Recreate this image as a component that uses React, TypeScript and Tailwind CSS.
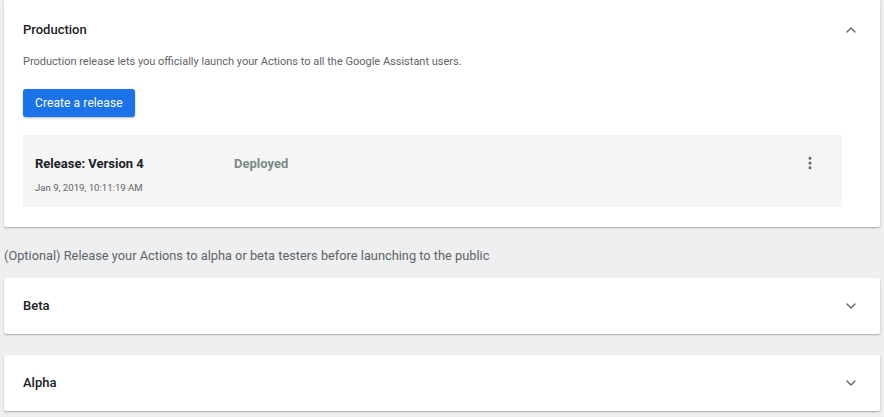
import { ChevronDown, ChevronUp, MoreVertical } from "lucide-react";

function Panel({ title }: { title: string }) {
  return (
    <div className="bg-white shadow-[0_1px_2px_rgba(0,0,0,0.3)] rounded-[2px] h-[56px] flex items-center justify-between pl-[19px] pr-[21px]">
      <span className="text-[13px] font-medium text-[#202124]">{title}</span>
      <ChevronDown size={16} strokeWidth={2} className="text-[#5f6368]" />
    </div>
  );
}

export default function App() {
  return (
    <main
      className="w-[884px] h-[417px] bg-[#eeeff1] pl-[4px] pr-[4px] overflow-hidden"
      style={{ fontFamily: "Roboto, 'Liberation Sans', sans-serif" }}
    >
      {/* Production */}
      <section className="bg-white shadow-[0_1px_2px_rgba(0,0,0,0.3)] rounded-b-[2px] h-[227px] pl-[19px] pr-[38px]">
        <div className="flex items-center justify-between h-[58px] pt-[1px]">
          <h2 className="text-[13px] font-medium text-[#202124]">Production</h2>
          <ChevronUp size={16} strokeWidth={2} className="text-[#5f6368] mr-[-17px]" />
        </div>
        <p className="text-[11px] text-[#5f6368] leading-[13px] -mt-[3px]">
          Production release lets you officially launch your Actions to all the Google Assistant users.
        </p>
        <button className="mt-[21px] h-[28px] px-[12px] rounded-[3px] bg-[#1a73e8] text-white text-[12px] font-normal tracking-[0.1px] shadow-[0_1px_2px_rgba(0,0,0,0.3)]">
          Create a release
        </button>
        <div className="mt-[18px] bg-[#f5f5f5] h-[72px] flex items-start pl-[12px] pr-[24px] pt-[21px]">
          <div className="w-[199px]">
            <div className="text-[13px] font-bold text-[#202124] leading-[15px]">Release: Version 4</div>
            <div className="text-[9.6px] text-[#5f6368] mt-[10px]">Jan 9, 2019, 10:11:19 AM</div>
          </div>
          <div className="text-[13px] font-bold text-[#7b8a85] leading-[15px]">Deployed</div>
          <MoreVertical size={16} strokeWidth={2.5} className="ml-auto text-[#5f6368] -mt-[1px]" />
        </div>
      </section>

      <p className="text-[12.8px] text-[#5f6368] mt-[21px] mb-[15px] leading-[15px]">
        (Optional) Release your Actions to alpha or beta testers before launching to the public
      </p>

      <div className="flex flex-col gap-[21px]">
        <Panel title="Beta" />
        <Panel title="Alpha" />
      </div>
    </main>
  );
}
